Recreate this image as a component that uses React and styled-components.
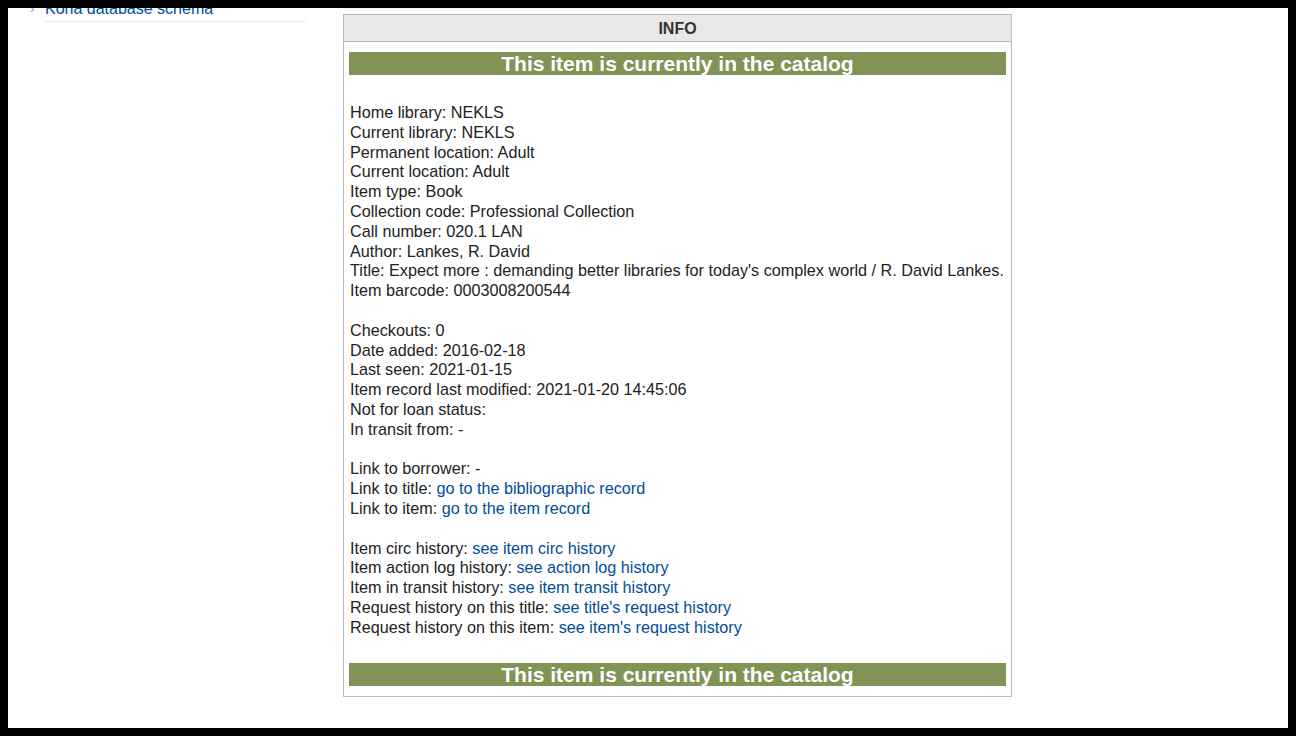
import React from "react";
import styled, { createGlobalStyle } from "styled-components";

const GlobalStyle = createGlobalStyle`
  html {
    background: #000;
  }
  body {
    margin: 8px;
    height: 720px;
    overflow: hidden;
    background: #fff;
    font-family: "Liberation Sans", Arial, sans-serif;
    font-size: 16px;
    color: #222;
  }
`;

const Page = styled.div`
  display: flex;
  align-items: flex-start;
  padding-left: 22px;
`;

const Sidebar = styled.ul`
  width: 276px;
  margin: -9px 0 0;
  padding: 0;
  list-style: none;
`;

const NavItem = styled.li`
  display: flex;
  align-items: flex-start;
`;

const Chevron = styled.span`
  width: 15px;
  flex: none;
  color: #999;
  font-size: 13px;
  line-height: 20px;
`;

const NavLink = styled.a`
  flex: 1;
  display: block;
  line-height: 20px;
  padding-bottom: 2px;
  border-bottom: 1px solid #e8e8e8;
  color: #004d99;
  text-decoration: none;
`;

const InfoBox = styled.section`
  width: 667px;
  margin: 6px 0 0 37px;
  border: 1px solid #bcbcbc;
`;

const BoxHeader = styled.div`
  height: 26px;
  line-height: 28px;
  background: #e8e8e8;
  border-bottom: 1px solid #bcbcbc;
  text-align: center;
  font-weight: bold;
  color: #333;
`;

const BoxBody = styled.div`
  padding: 10px 5px 10px;
`;

const Banner = styled.h1`
  margin: 0;
  height: 23px;
  line-height: 23px;
  overflow: hidden;
  background: #829356;
  color: #fff;
  font-size: 21px;
  font-weight: bold;
  text-align: center;
`;

const Details = styled.div`
  margin: 28px 0 25px 1px;
  font-size: 16.2px;
  line-height: 19.8px;
  color: #222;
`;

const Group = styled.div`
  & + & {
    margin-top: 19.8px;
  }
`;

const Row = styled.div`
  white-space: nowrap;
`;

const Link = styled.a`
  color: #004d99;
  text-decoration: none;
`;

const groups = [
  [
    ["Home library", "NEKLS"],
    ["Current library", "NEKLS"],
    ["Permanent location", "Adult"],
    ["Current location", "Adult"],
    ["Item type", "Book"],
    ["Collection code", "Professional Collection"],
    ["Call number", "020.1 LAN"],
    ["Author", "Lankes, R. David"],
    [
      "Title",
      "Expect more : demanding better libraries for today's complex world / R. David Lankes.",
    ],
    ["Item barcode", "0003008200544"],
  ],
  [
    ["Checkouts", "0"],
    ["Date added", "2016-02-18"],
    ["Last seen", "2021-01-15"],
    ["Item record last modified", "2021-01-20 14:45:06"],
    ["Not for loan status", ""],
    ["In transit from", "-"],
  ],
  [
    ["Link to borrower", "-"],
    ["Link to title", "go to the bibliographic record", true],
    ["Link to item", "go to the item record", true],
  ],
  [
    ["Item circ history", "see item circ history", true],
    ["Item action log history", "see action log history", true],
    ["Item in transit history", "see item transit history", true],
    ["Request history on this title", "see title's request history", true],
    ["Request history on this item", "see item's request history", true],
  ],
];

export default function App() {
  return (
    <>
      <GlobalStyle />
      <Page>
        <Sidebar>
          <NavItem>
            <Chevron>›</Chevron>
            <NavLink href="#">Koha database schema</NavLink>
          </NavItem>
        </Sidebar>
        <InfoBox>
          <BoxHeader>INFO</BoxHeader>
          <BoxBody>
            <Banner>This item is currently in the catalog</Banner>
            <Details>
              {groups.map((rows, i) => (
                <Group key={i}>
                  {rows.map(([label, value, isLink]) => (
                    <Row key={label}>
                      {label}:{" "}
                      {isLink ? <Link href="#">{value}</Link> : value}
                    </Row>
                  ))}
                </Group>
              ))}
            </Details>
            <Banner>This item is currently in the catalog</Banner>
          </BoxBody>
        </InfoBox>
      </Page>
    </>
  );
}
